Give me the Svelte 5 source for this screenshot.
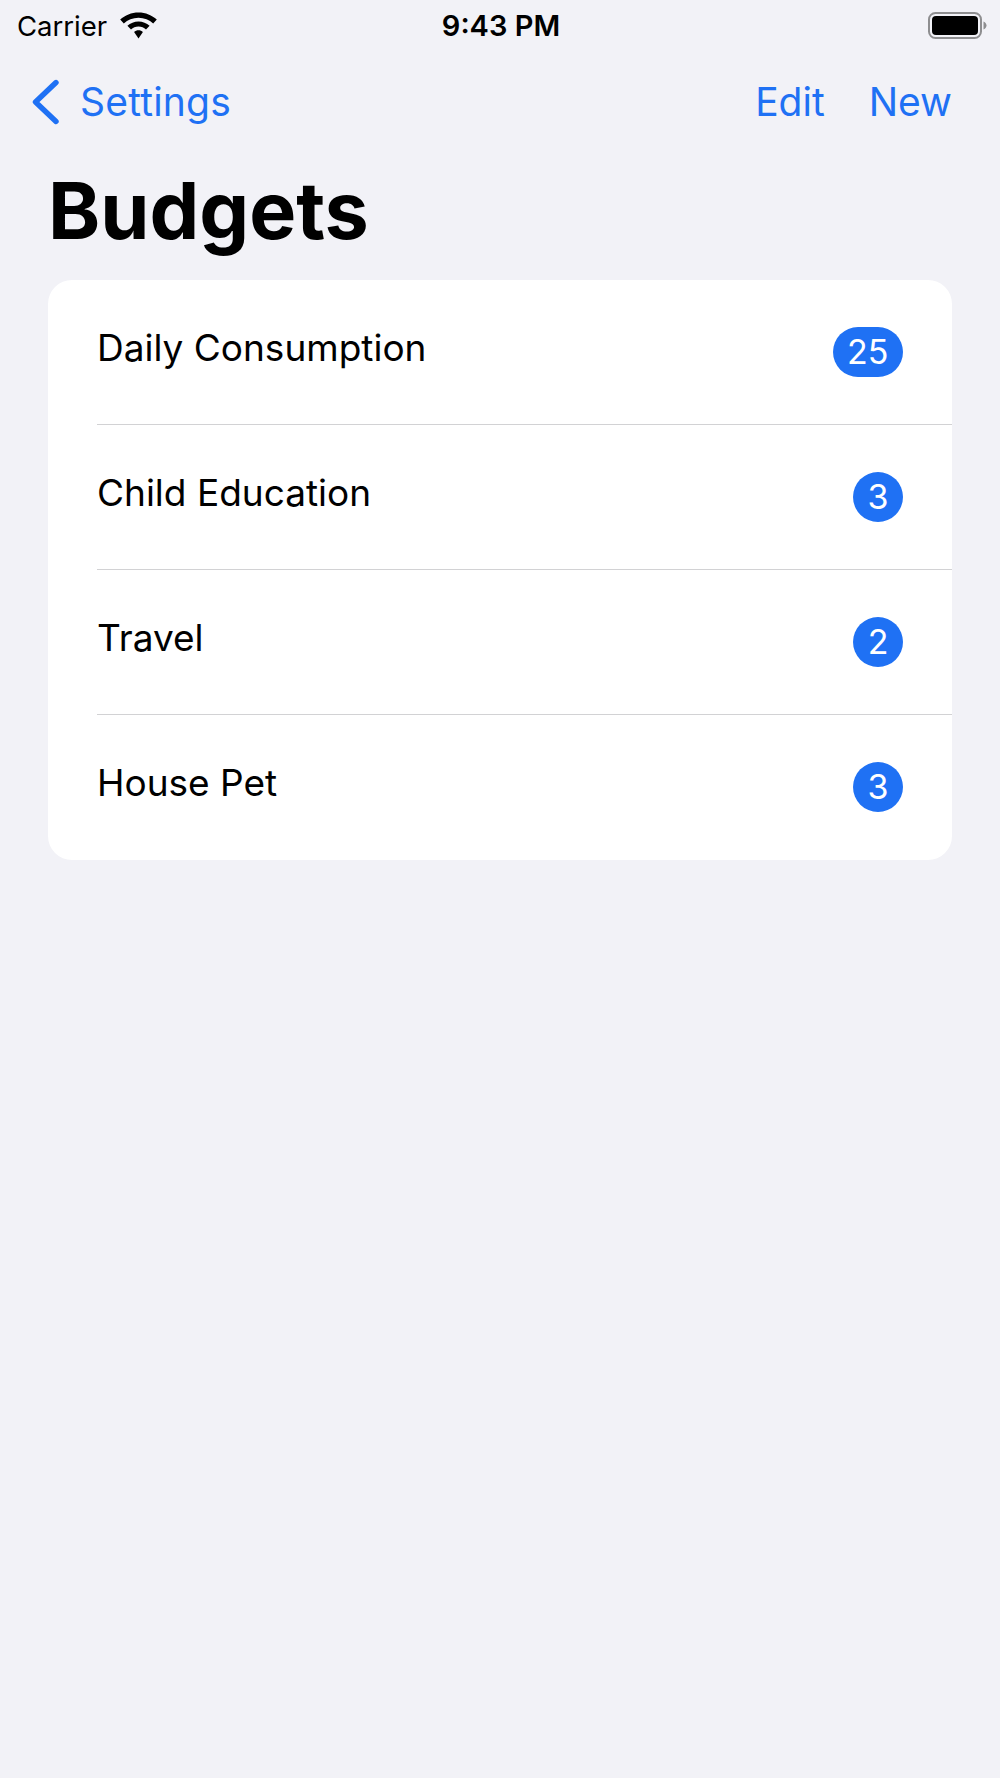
<script>
  const budgets = [
    { name: 'Daily Consumption', count: 25 },
    { name: 'Child Education', count: 3 },
    { name: 'Travel', count: 2 },
    { name: 'House Pet', count: 3 }
  ];
</script>

<div class="screen">
  <div class="status">
    <div class="status-left">
      <span class="carrier">Carrier</span>
      <svg class="wifi" viewBox="0 0 37 27" width="37" height="27" aria-hidden="true">
        <path d="M18.5 0.5C25.6 0.5 32 3.2 36.8 7.6L33.2 11.4C29.3 7.9 24.2 5.7 18.5 5.7C12.8 5.7 7.7 7.9 3.8 11.4L0.2 7.6C5 3.2 11.4 0.5 18.5 0.5Z" />
        <path d="M18.5 9.4C22.7 9.4 26.6 11 29.6 13.7L26 17.5C24 15.7 21.4 14.6 18.5 14.6C15.6 14.6 13 15.7 11 17.5L7.4 13.7C10.4 11 14.3 9.4 18.5 9.4Z" />
        <path d="M18.5 18.3C20.2 18.3 21.7 18.9 22.9 19.9L18.5 26.5L14.1 19.9C15.3 18.9 16.8 18.3 18.5 18.3Z" />
      </svg>
    </div>
    <span class="time">9:43 PM</span>
    <svg class="battery" viewBox="0 0 59 28" width="59" height="28" aria-hidden="true">
      <rect x="1" y="1" width="52" height="25" rx="6.5" fill="none" stroke="#8e8e90" stroke-width="2" />
      <rect x="4" y="4" width="46" height="19" rx="4" fill="#000" />
      <path d="M55.5 9.5C57.5 10.5 58.5 12 58.5 13.5C58.5 15 57.5 16.5 55.5 17.5Z" fill="#8e8e90" />
    </svg>
  </div>

  <nav class="nav">
    <button class="back">
      <svg viewBox="0 0 28 46" width="28" height="46" aria-hidden="true">
        <path d="M24 3.5L3.5 23L24 42.5" fill="none" stroke="#1f71f4" stroke-width="5.4" stroke-linecap="round" stroke-linejoin="round" />
      </svg>
      <span class="back-label">Settings</span>
    </button>
    <div class="actions">
      <button>Edit</button>
      <button>New</button>
    </div>
  </nav>

  <h1>Budgets</h1>

  <ul class="card">
    {#each budgets as budget}
      <li class="row">
        <span class="name">{budget.name}</span>
        <span class="badge">{budget.count}</span>
      </li>
    {/each}
  </ul>
</div>

<style>
  :global(body) {
    background: #f2f2f7;
  }

  .screen {
    height: 1778px;
    background: #f2f2f7;
    font-family: Inter, 'Liberation Sans', sans-serif;
    color: #000;
    overflow: hidden;
  }

  .status {
    display: grid;
    grid-template-columns: 1fr auto 1fr;
    align-items: center;
    height: 50px;
    padding: 0 13px 0 17px;
  }

  .status-left {
    display: flex;
    align-items: center;
    gap: 13px;
  }

  .carrier {
    font-size: 27.5px;
    line-height: 50px;
  }

  .wifi {
    fill: #000;
    margin-top: -2px;
  }

  .time {
    font-size: 29px;
    font-weight: 600;
    line-height: 52px;
    margin-left: -2px;
  }

  .battery {
    justify-self: end;
    margin-top: -1px;
  }

  .nav {
    display: flex;
    align-items: center;
    justify-content: space-between;
    height: 60px;
    margin-top: 22px;
    padding: 0 48px 0 32px;
  }

  button {
    border: 0;
    padding: 0;
    background: none;
    font: inherit;
    font-size: 39px;
    line-height: 60px;
    color: #1f71f4;
  }

  .back {
    display: flex;
    align-items: center;
    gap: 20px;
  }

  .back-label {
    letter-spacing: 0.2px;
  }

  .actions {
    display: flex;
    gap: 44px;
  }

  h1 {
    box-sizing: border-box;
    margin: 0;
    padding: 38px 0 0 48px;
    height: 148px;
    font-size: 79px;
    font-weight: 700;
    line-height: 80px;
  }

  .card {
    list-style: none;
    margin: 0 48px;
    padding: 0 0 1px;
    background: #fff;
    border-radius: 24px;
    overflow: hidden;
  }

  .row {
    display: flex;
    align-items: center;
    justify-content: space-between;
    height: 144px;
    margin-left: 49px;
    padding-right: 49px;
    border-top: 1px solid #d2d2d4;
  }

  .row:first-child {
    border-top: 0;
  }

  .name {
    font-size: 37px;
    line-height: 44px;
    margin-top: -9px;
  }

  .badge {
    box-sizing: border-box;
    min-width: 50px;
    height: 50px;
    padding: 0 14.5px;
    border-radius: 25px;
    background: #1f71f4;
    color: #fff;
    font-size: 34px;
    line-height: 50px;
    text-align: center;
  }
</style>
